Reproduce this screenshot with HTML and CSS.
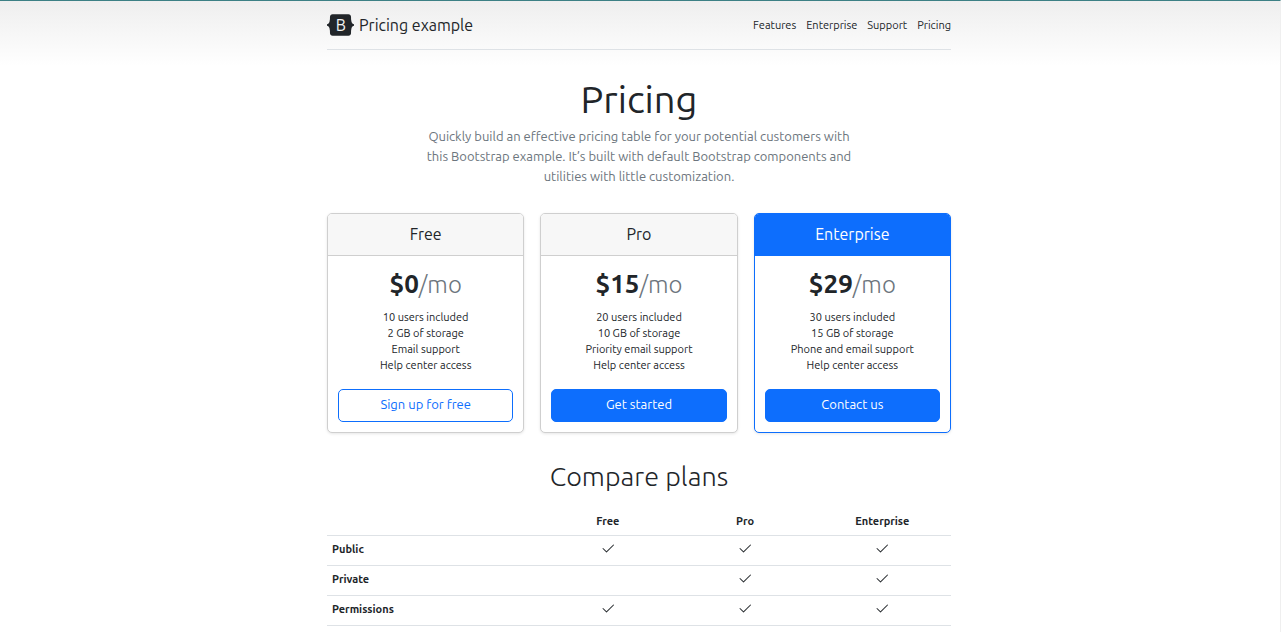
FILE: index.html
```
<!DOCTYPE html>
<html lang="en">
<head>
<meta charset="utf-8">
<meta name="viewport" content="width=device-width, initial-scale=1">
<title>Pricing example</title>
<link rel="stylesheet" href="styles.css">
</head>
<body>
<svg class="symbols" aria-hidden="true">
  <symbol id="check" viewBox="0 0 16 16">
    <path d="M13.854 3.646a.5.5 0 0 1 0 .708l-7 7a.5.5 0 0 1-.708 0l-3.5-3.5a.5.5 0 1 1 .708-.708L6.5 10.293l6.646-6.647a.5.5 0 0 1 .708 0z"/>
  </symbol>
</svg>
<div class="container">
  <header class="site-header">
    <a class="brand" href="#">
      <svg class="brand-logo" viewBox="0 0 118 94" role="img" aria-label="Bootstrap">
        <path fill="currentColor" d="M24.509 0c-6.733 0-11.715 5.893-11.492 12.284.214 6.14-.064 14.092-2.066 20.577C8.943 39.365 5.547 43.485 0 44.014v5.972c5.547.529 8.943 4.649 10.951 11.153 2.002 6.485 2.28 14.437 2.066 20.577C12.794 88.106 17.776 94 24.51 94H93.5c6.733 0 11.714-5.893 11.491-12.284-.214-6.14.064-14.092 2.066-20.577 2.009-6.504 5.396-10.624 10.943-11.153v-5.972c-5.547-.529-8.934-4.649-10.943-11.153-2.002-6.484-2.28-14.437-2.066-20.577C105.214 5.894 100.233 0 93.5 0H24.508z"/>
        <text class="brand-letter" x="60" y="72" text-anchor="middle">B</text>
      </svg>
      <span>Pricing example</span>
    </a>
    <nav class="site-nav">
      <a href="#">Features</a>
      <a href="#">Enterprise</a>
      <a href="#">Support</a>
      <a href="#">Pricing</a>
    </nav>
  </header>

  <div class="intro">
    <h1>Pricing</h1>
    <p>Quickly build an effective pricing table for your potential customers with this Bootstrap example. It’s built with default Bootstrap components and utilities with little customization.</p>
  </div>

  <main>
    <div class="plans">
      <section class="card">
        <h2 class="card-header">Free</h2>
        <div class="card-body">
          <p class="price">$0<small>/mo</small></p>
          <ul>
            <li>10 users included</li>
            <li>2 GB of storage</li>
            <li>Email support</li>
            <li>Help center access</li>
          </ul>
          <button type="button" class="btn btn-outline">Sign up for free</button>
        </div>
      </section>
      <section class="card">
        <h2 class="card-header">Pro</h2>
        <div class="card-body">
          <p class="price">$15<small>/mo</small></p>
          <ul>
            <li>20 users included</li>
            <li>10 GB of storage</li>
            <li>Priority email support</li>
            <li>Help center access</li>
          </ul>
          <button type="button" class="btn">Get started</button>
        </div>
      </section>
      <section class="card card-primary">
        <h2 class="card-header">Enterprise</h2>
        <div class="card-body">
          <p class="price">$29<small>/mo</small></p>
          <ul>
            <li>30 users included</li>
            <li>15 GB of storage</li>
            <li>Phone and email support</li>
            <li>Help center access</li>
          </ul>
          <button type="button" class="btn">Contact us</button>
        </div>
      </section>
    </div>

    <h2 class="compare-title">Compare plans</h2>
    <table class="compare">
      <thead>
        <tr><td></td><th scope="col">Free</th><th scope="col">Pro</th><th scope="col">Enterprise</th></tr>
      </thead>
      <tbody>
        <tr>
          <th scope="row">Public</th>
          <td><svg class="check"><use href="#check"/></svg></td>
          <td><svg class="check"><use href="#check"/></svg></td>
          <td><svg class="check"><use href="#check"/></svg></td>
        </tr>
        <tr>
          <th scope="row">Private</th>
          <td></td>
          <td><svg class="check"><use href="#check"/></svg></td>
          <td><svg class="check"><use href="#check"/></svg></td>
        </tr>
        <tr>
          <th scope="row">Permissions</th>
          <td><svg class="check"><use href="#check"/></svg></td>
          <td><svg class="check"><use href="#check"/></svg></td>
          <td><svg class="check"><use href="#check"/></svg></td>
        </tr>
      </tbody>
    </table>
  </main>
</div>
</body>
</html>
```
FILE: styles.css
```
*, *::before, *::after { box-sizing: border-box; }

body {
  min-height: 100vh;
  margin: 0;
  padding-right: 2px;
  border-top: 1px solid #3c8085;
  border-right: 1px solid #efefef;
  background: linear-gradient(180deg, #eeeeee, #ffffff 66px) no-repeat #ffffff;
  color: #212529;
  font-family: Ubuntu, "Noto Sans", "Open Sans", sans-serif;
  font-size: 11px;
  line-height: 16px;
}

h1, h2, p, ul { margin: 0; padding: 0; font-weight: 400; }
ul { list-style: none; }
a { color: inherit; text-decoration: none; }

.symbols { display: none; }

.container {
  max-width: 640px;
  margin: 0 auto;
  padding: 11px 8px 0;
}

.site-header {
  display: flex;
  align-items: center;
  justify-content: space-between;
  padding-bottom: 11px;
  border-bottom: 1px solid #dee2e6;
}

.brand {
  display: flex;
  align-items: center;
  gap: 5px;
  font-size: 16px;
  line-height: 26px;
}

.brand-logo { width: 27px; height: 22px; }
.brand-letter { fill: #f4f4f4; font-size: 70px; }

.site-nav { display: flex; gap: 10px; }

.intro {
  max-width: 464px;
  margin: 0 auto;
  padding: 26px 11px 27px;
  text-align: center;
}

.intro h1 { margin-bottom: 4px; font-size: 38px; line-height: 46px; }
.intro p { color: #6c757d; font-size: 13px; line-height: 20px; }

.plans {
  display: grid;
  grid-template-columns: repeat(3, 1fr);
  gap: 16px;
  text-align: center;
}

.card {
  border: 1px solid #cfcfcf;
  border-radius: 5px;
  background: #ffffff;
  box-shadow: 0 1px 3px rgba(0, 0, 0, 0.1);
  overflow: hidden;
}

.card-header {
  padding: 11px;
  border-bottom: 1px solid #cfcfcf;
  background: #f7f7f7;
  font-size: 16px;
  line-height: 19px;
}

.card-body { padding: 12px 10px 10px; }

.price { font-size: 26px; line-height: 32px; font-weight: 600; }
.price small { color: #6c757d; font-size: 24px; font-weight: 300; }

.card ul { padding: 8px 0 16px; }

.btn {
  display: block;
  width: 100%;
  padding: 4px 11px 6px;
  border: 1px solid #0d6efd;
  border-radius: 5px;
  background: #0d6efd;
  color: #ffffff;
  font: inherit;
  font-size: 13px;
  line-height: 21px;
}

.btn-outline { background: #ffffff; color: #0d6efd; }

.card-primary, .card-primary .card-header { border-color: #0d6efd; }
.card-primary .card-header { background: #0d6efd; color: #ffffff; }

.compare-title {
  padding: 27px 0 17px;
  font-size: 27px;
  line-height: 32px;
  font-weight: 300;
  text-align: center;
}

.compare {
  width: 100%;
  border-collapse: separate;
  border-spacing: 0;
  table-layout: fixed;
  text-align: center;
}

.compare th, .compare td {
  width: 22%;
  padding: 5px;
  border-bottom: 1px solid #dee2e6;
  vertical-align: top;
  font-weight: 700;
}

.compare thead th { padding: 4px 5px 6px; }
.compare th:first-child, .compare td:first-child { width: 34%; text-align: left; }
.compare tbody th, .compare tbody td { height: 30px; }

.check { display: block; width: 16px; height: 16px; margin: 0 auto; fill: currentColor; }
```
